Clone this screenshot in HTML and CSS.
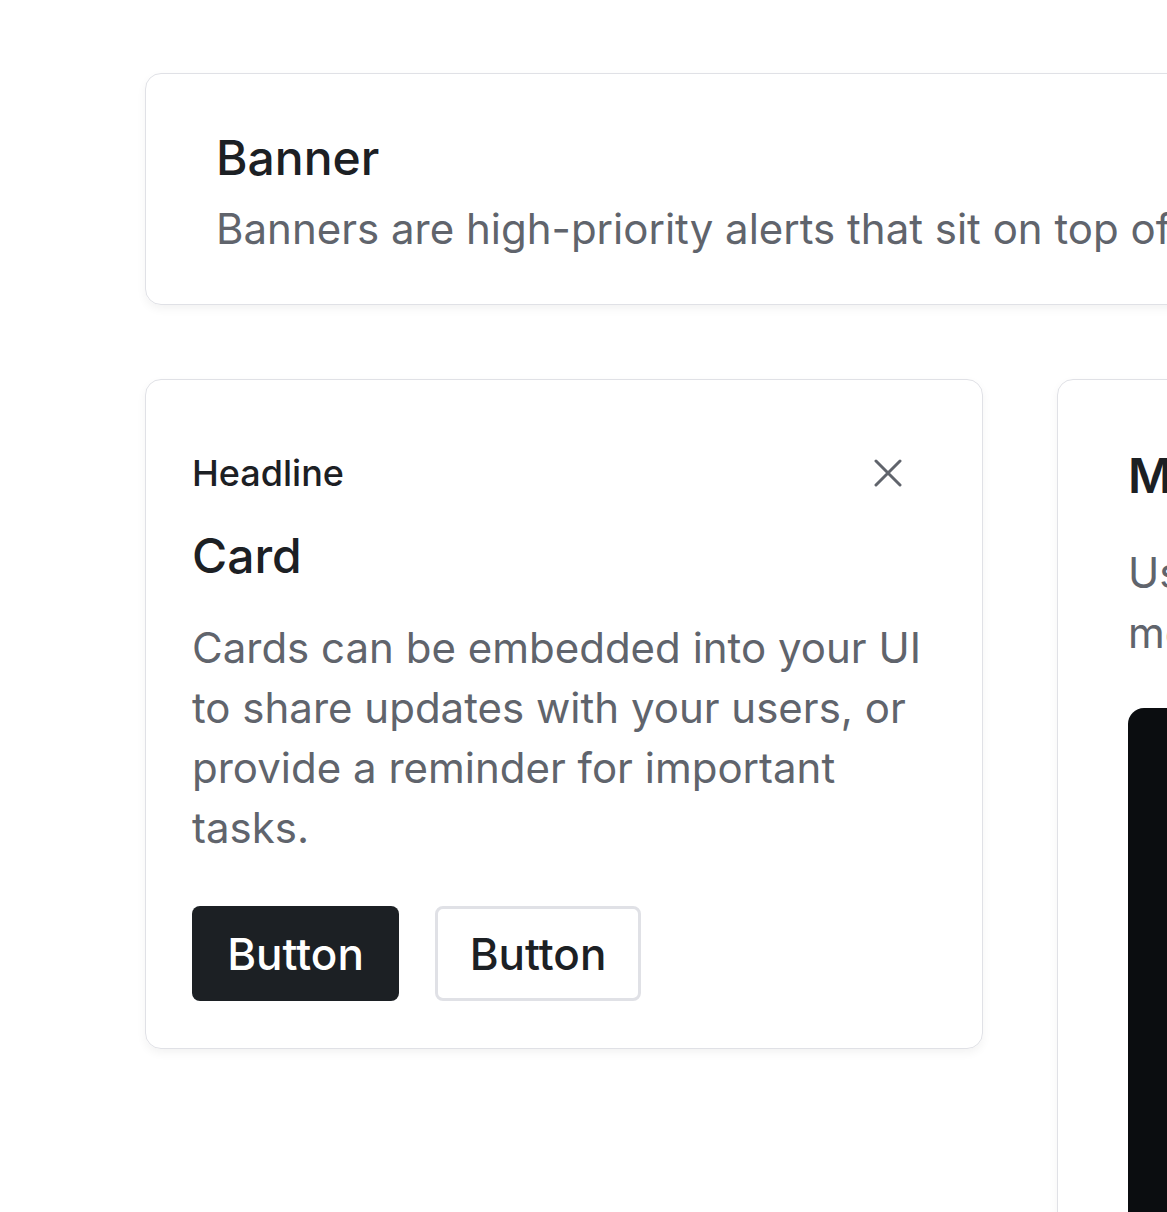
FILE: index.html
```html
<!DOCTYPE html>
<html lang="en">
<head>
<meta charset="utf-8">
<title>Components</title>
<link rel="stylesheet" href="styles.css">
</head>
<body>
<main class="page">
  <section class="banner">
    <h2 class="banner-title">Banner</h2>
    <p class="banner-text">Banners are high-priority alerts that sit on top of your interface to share important updates with your users.</p>
  </section>
  <div class="row">
    <section class="card">
      <div class="card-head">
        <span class="headline">Headline</span>
        <button class="close" aria-label="Close">
          <svg width="28" height="28" viewBox="0 0 28 28" fill="none" stroke="currentColor" stroke-width="3" stroke-linecap="round"><path d="M2 2 L26 26 M26 2 L2 26"/></svg>
        </button>
      </div>
      <h3 class="card-title">Card</h3>
      <p class="card-text">Cards can be embedded into your UI to share updates with your users, or provide a reminder for important tasks.</p>
      <div class="actions">
        <button class="btn btn-solid">Button</button>
        <button class="btn btn-outline">Button</button>
      </div>
    </section>
    <section class="card card-modal">
      <h3 class="modal-title">Modal</h3>
      <p class="modal-text">Use modals for announcements, messages and onboarding flows.</p>
      <div class="preview"></div>
    </section>
  </div>
</main>
</body>
</html>
```

FILE: styles.css
```css
* { box-sizing: border-box; }
html, body { margin: 0; padding: 0; background: #ffffff; overflow: hidden; }
body { font-family: Inter, "Noto Sans", sans-serif; color: #1c2024; width: 1167px; height: 1212px; }
.page { padding: 73px 0 0 145px; width: 2400px; }
.banner {
  width: 1700px;
  height: 232px;
  border: 1px solid #e0e1e6;
  border-radius: 16px;
  padding: 56px 70px 0;
  box-shadow: 0 4px 10px rgba(0, 0, 0, 0.05);
}
.banner-title { margin: 0; font-size: 48px; font-weight: 500; line-height: 56px; }
.banner-text { margin: 13px 0 0; font-size: 42px; line-height: 60px; color: #60646c; white-space: nowrap; }
.row { display: flex; gap: 74px; margin-top: 74px; align-items: flex-start; }
.card {
  width: 838px;
  flex: none;
  border: 1px solid #e0e1e6;
  border-radius: 16px;
  padding: 48px 46px 47px;
  box-shadow: 0 4px 10px rgba(0, 0, 0, 0.05);
}
.card-head { display: flex; align-items: center; justify-content: space-between; height: 44px; margin-top: 23px; }
.headline { font-size: 36px; font-weight: 500; line-height: 44px; }
.close { border: 0; background: none; padding: 0; color: #60646c; margin-right: 34px; display: flex; }
.card-title { margin: 33px 0 0; font-size: 48px; font-weight: 500; line-height: 56px; }
.card-text { margin: 34px 0 0; font-size: 42px; line-height: 60px; color: #60646c; }
.actions { display: flex; gap: 36px; margin-top: 48px; }
.btn {
  font-family: inherit;
  font-size: 44px;
  font-weight: 500;
  height: 95px;
  padding: 0;
  border-radius: 8px;
  display: flex;
  align-items: center;
  justify-content: center;
}
.btn-solid { background: #1c2024; color: #ffffff; border: 0; width: 207px; }
.btn-outline { background: #ffffff; color: #1c2024; border: 3px solid #e0e1e6; width: 206px; }
.card-modal { height: 1100px; padding: 68px 70px 70px; }
.modal-title { margin: 0; font-size: 48px; font-weight: 600; line-height: 56px; }
.modal-text { margin: 39px 0 0; font-size: 42px; line-height: 60px; color: #60646c; }
.preview { margin-top: 45px; height: 700px; background: #0b0d10; border-radius: 16px; }
```
